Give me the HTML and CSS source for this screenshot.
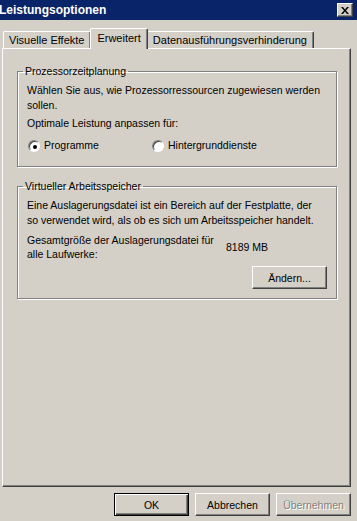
FILE: index.html
```html
<!DOCTYPE html>
<html>
<head>
    <title>Leistungsoptionen</title>
    <link rel="stylesheet" href="styles.css">
</head>
<body>
<div class="titlebar">
    <span class="title">Leistungsoptionen</span>
    <span class="close-btn">
        <svg width="8" height="7" viewBox="0 0 8 7"><path d="M0 0h2l2 2.5L6 0h2L5 3.5 8 7H6L4 4.5 2 7H0l3-3.5z" fill="#000"/></svg>
    </span>
</div>

<div class="tabs">
    <div class="tab">Visuelle Effekte</div>
    <div class="tab active">Erweitert</div>
    <div class="tab">Datenausführungsverhinderung</div>
</div>

<div class="panel">
    <fieldset class="group group-cpu">
        <legend>Prozessorzeitplanung</legend>
        <p class="text">Wählen Sie aus, wie Prozessorressourcen zugewiesen werden sollen.</p>
        <p class="text">Optimale Leistung anpassen für:</p>
        <div class="radios">
            <label class="radio"><span class="radio-dot checked"></span>Programme</label>
            <label class="radio"><span class="radio-dot"></span>Hintergrunddienste</label>
        </div>
    </fieldset>

    <fieldset class="group group-mem">
        <legend>Virtueller Arbeitsspeicher</legend>
        <p class="text">Eine Auslagerungsdatei ist ein Bereich auf der Festplatte, der so verwendet wird, als ob es sich um Arbeitsspeicher handelt.</p>
        <div class="size-row">
            <span class="size-label">Gesamtgröße der Auslagerungsdatei für alle Laufwerke:</span>
            <span class="size-value">8189 MB</span>
        </div>
        <div class="change-row">
            <button class="btn">Ändern...</button>
        </div>
    </fieldset>
</div>

<div class="buttons">
    <button class="btn default">OK</button>
    <button class="btn">Abbrechen</button>
    <button class="btn disabled">Übernehmen</button>
</div>
</body>
</html>
```

FILE: styles.css
```css
body {
    margin: 0;
    padding: 0;
    background-color: #d4d0c8;
    font-family: 'Liberation Sans', Arial, sans-serif;
    font-size: 10.5px;
    color: #000;
    overflow: hidden;
}

/* title bar */
.titlebar {
    height: 20px;
    background-color: #0a246a;
    display: flex;
    align-items: center;
    justify-content: space-between;
    padding: 0 4px 0 0;
    margin-bottom: 8px;
}
.title {
    color: #fff;
    font-weight: bold;
    font-size: 12px;
    margin-left: -1px;
}
.close-btn {
    width: 16px;
    height: 14px;
    box-sizing: border-box;
    display: flex;
    align-items: center;
    justify-content: center;
    background-color: #d4d0c8;
    border: 1px solid;
    border-color: #fff #404040 #404040 #fff;
    box-shadow: inset -1px -1px #808080;
}

/* tabs */
.tabs {
    display: flex;
    align-items: flex-end;
    padding-left: 3px;
    height: 20px;
    position: relative;
    z-index: 1;
    font-size: 11px;
}
.tab {
    height: 16px;
    line-height: 16px;
    padding: 0 6px 0 5px;
    border-top: 1px solid #fff;
    border-left: 1px solid #fff;
    border-right: 1px solid #404040;
    box-shadow: inset -1px 0 #808080;
    border-radius: 2px 2px 0 0;
}
.tab.active {
    height: 20px;
    line-height: 18px;
    padding: 0 6px 0 6px;
    margin: 0 -1px -1px -1px;
    background-color: #d4d0c8;
    position: relative;
}

/* tab panel */
.panel {
    width: 349px;
    height: 439px;
    margin-left: 2px;
    border: 1px solid;
    border-color: #fff #404040 #404040 #fff;
    box-shadow: inset -1px -1px #808080;
    padding: 16px 0 0 14px;
    box-sizing: border-box;
}

.group {
    width: 320px;
    box-sizing: border-box;
    margin: 0;
    padding: 5px 12px 0 9px;
    border: 1px solid #808080;
    box-shadow: inset 1px 1px #fff, 1px 1px #fff;
}
.group legend {
    padding: 0 2px;
    margin-left: -4px;
    line-height: 13px;
}
.group-cpu {
    height: 102px;
}
.group-mem {
    margin-top: 13px;
    height: 119px;
}

.text {
    margin: 0;
    line-height: 15px;
}
.text + .text {
    margin-top: 3px;
}

.radios {
    display: flex;
    margin-top: 7px;
    line-height: 15px;
}
.radio {
    display: flex;
    align-items: center;
    width: 124px;
}
.radio-dot {
    width: 10px;
    height: 10px;
    border: 1px solid;
    border-color: #808080 #fff #fff #808080;
    border-radius: 50%;
    background-color: #fff;
    box-shadow: inset 1px 1px #404040;
    margin: 0 4px 0 1px;
    position: relative;
}
.radio-dot.checked::after {
    content: "";
    position: absolute;
    left: 4px;
    top: 4px;
    width: 4px;
    height: 4px;
    border-radius: 50%;
    background-color: #000;
}

.size-row {
    display: flex;
    align-items: center;
    line-height: 14px;
    margin-top: 5px;
}
.size-label {
    width: 190px;
    margin-right: 9px;
}

.change-row {
    display: flex;
    justify-content: flex-end;
    margin: 5px -3px 0 0;
}

/* buttons */
.btn {
    font-family: 'Liberation Sans', Arial, sans-serif;
    font-size: 10.5px;
    color: #000;
    width: 75px;
    height: 23px;
    padding: 0;
    background-color: #d4d0c8;
    border: 1px solid;
    border-color: #fff #404040 #404040 #fff;
    box-shadow: inset -1px -1px #808080;
}
.btn.default {
    border: 1px solid #000;
    box-shadow: inset 1px 1px #fff, inset -1px -1px #404040, inset -2px -2px #808080;
}
.btn.disabled {
    color: #808080;
    text-shadow: 1px 1px #fff;
}

.buttons {
    display: flex;
    justify-content: flex-end;
    gap: 6px;
    padding: 6px 6px 0 0;
}
```
